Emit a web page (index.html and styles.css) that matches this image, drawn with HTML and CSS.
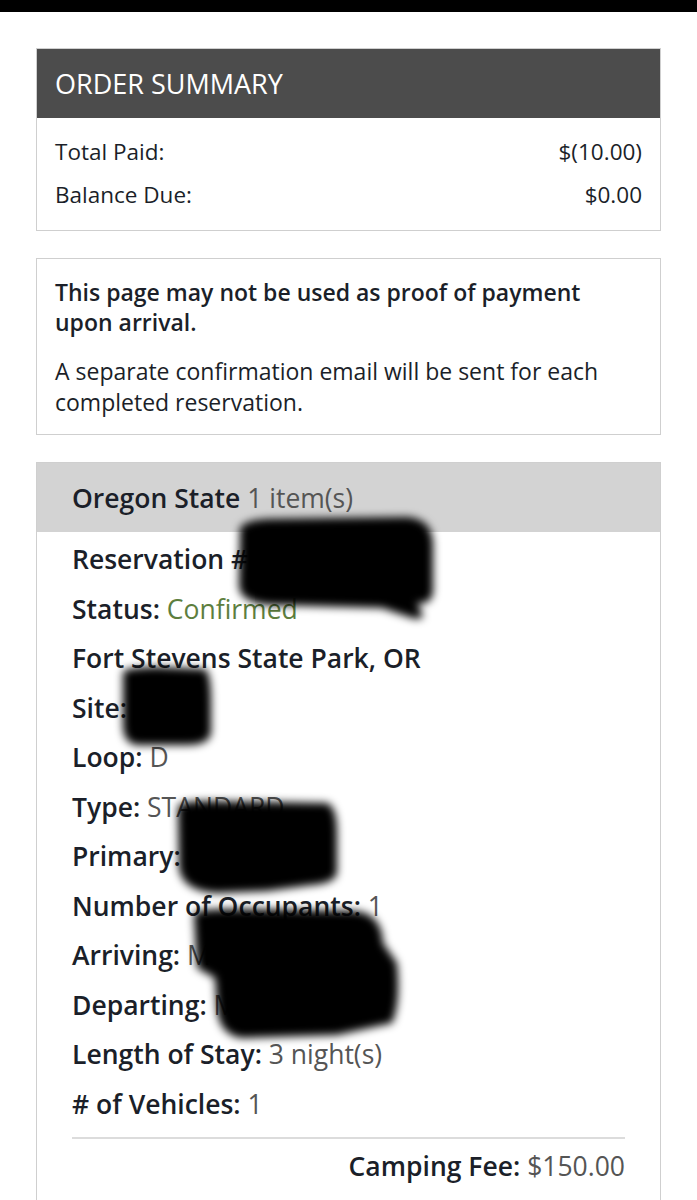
FILE: index.html
```html
<!DOCTYPE html>
<html>
<head>
<meta charset="utf-8">
<link rel="stylesheet" href="styles.css">
</head>
<body>
<div class="topbar"></div>
<main class="page">
  <section class="card summary">
    <div class="summary-head">ORDER SUMMARY</div>
    <div class="summary-body">
      <div class="sum-row"><span>Total Paid:</span><span>$(10.00)</span></div>
      <div class="sum-row"><span>Balance Due:</span><span>$0.00</span></div>
    </div>
  </section>

  <section class="card notice">
    <p class="notice-strong">This page may not be used as proof of payment upon arrival.</p>
    <p class="notice-text">A separate confirmation email will be sent for each completed reservation.</p>
  </section>

  <section class="card cart">
    <div class="cart-head"><span class="cart-title"><b>Oregon State</b> <span class="muted">1 item(s)</span></span></div>
    <div class="cart-body">
      <div class="row"><b>Reservation #</b> <span class="val">0000000</span></div>
      <div class="row"><b>Status:</b> <span class="ok">Confirmed</span></div>
      <div class="row"><b>Fort Stevens State Park, OR</b></div>
      <div class="row"><b>Site:</b> <span class="val">D00</span></div>
      <div class="row"><b>Loop:</b> <span class="val">D</span></div>
      <div class="row"><b>Type:</b> <span class="val">STANDARD</span></div>
      <div class="row"><b>Primary:</b> <span class="val">Name</span></div>
      <div class="row"><b>Number of Occupants:</b> <span class="val">1</span></div>
      <div class="row"><b>Arriving:</b> <span class="val">Mon 00/00</span></div>
      <div class="row"><b>Departing:</b> <span class="val">Mon 00/00</span></div>
      <div class="row"><b>Length of Stay:</b> <span class="val">3 night(s)</span></div>
      <div class="row"><b># of Vehicles:</b> <span class="val">1</span></div>
      <div class="fee"><b>Camping Fee:</b> <span class="val">$150.00</span></div>
    </div>
    <svg class="redact" width="625" height="740" viewBox="0 0 625 740">
      <defs><filter id="bl" x="-20%" y="-20%" width="140%" height="140%"><feGaussianBlur stdDeviation="4"/></filter></defs>
      <g fill="#000" filter="url(#bl)">
        <path d="M203 70 Q200 58 230 56 L370 54 Q395 56 396 80 L396 130 Q394 142 380 140 L385 150 Q388 158 375 155 L345 145 L235 142 Q200 140 202 120 Z"/>
        <path d="M86 210 Q84 205 120 204 L168 206 Q174 210 174 240 L174 270 Q172 282 150 282 L100 282 Q86 280 86 262 Z"/>
        <path d="M141 345 Q140 338 170 338 L290 340 Q300 344 300 370 L300 410 Q298 420 275 422 L230 428 L180 430 Q145 428 142 405 Z"/>
        <path d="M157 452 Q154 446 200 446 L320 448 Q345 452 346 480 L360 500 Q364 540 355 560 L300 572 L205 575 Q182 572 180 545 L178 515 L160 505 Z"/>
      </g>
    </svg>
  </section>
</main>
</body>
</html>
```
FILE: styles.css
```css
* { box-sizing: border-box; }
html, body { margin: 0; padding: 0; background: #fff; }
body { font-family: "Open Sans", "Liberation Sans", sans-serif; color: #1b1f29; }
.topbar { height: 12px; background: #000; }
.page { padding: 36px 36px 0; display: flex; flex-direction: column; gap: 27px; }
.card { border: 1px solid #cfcfcf; background: #fff; }
.summary-head { background: #4c4c4c; color: #fff; height: 69px; display: flex; align-items: center; padding: 0 18px; font-size: 27px; }
.summary-body { padding: 12px 18px 14px; }
.sum-row { display: flex; justify-content: space-between; font-size: 22.5px; line-height: 43px; }
.notice { padding: 18px 30px 16px 18px; }
.notice p { margin: 0; font-size: 23px; line-height: 30px; }
.notice-strong { font-weight: 600; margin-bottom: 19px !important; }
.notice-text { line-height: 31px !important; }
.cart { position: relative; height: 760px; }
.cart-head { background: #d3d3d3; height: 69px; display: flex; align-items: center; padding: 0 35px; font-size: 26.5px; }
.cart-head b { font-weight: 600; }
.muted { color: #555; }
.cart-body { padding: 3px 35px 0; }
.row { font-size: 26.5px; line-height: 49.5px; white-space: nowrap; }
.row b, .fee b { font-weight: 600; }
.val { color: #555; }
.ok { color: #5d7e3e; }
.fee { border-top: 2px solid #dcdcdc; margin-top: 8px; padding-top: 7px; text-align: right; font-size: 26.5px; line-height: 40px; }
.redact { position: absolute; left: 0; top: 0; overflow: visible; }
```
